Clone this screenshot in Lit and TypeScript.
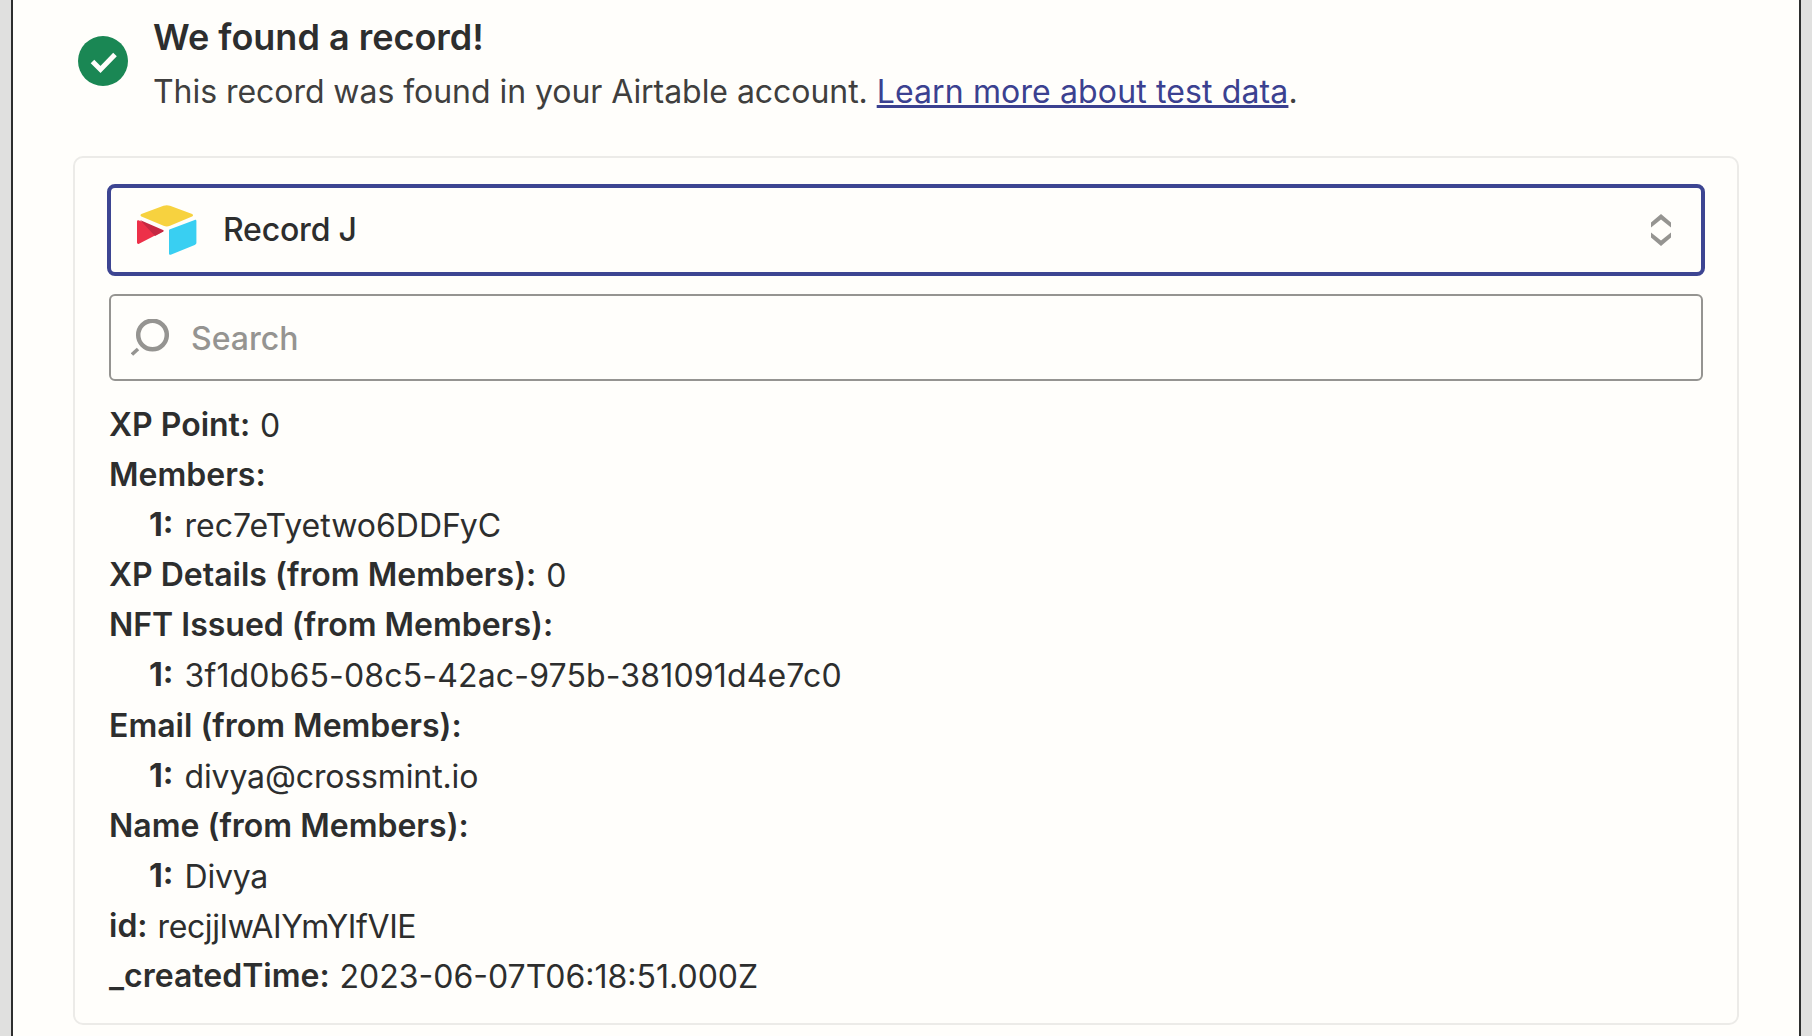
import { LitElement, html, css } from "lit";
import { customElement } from "lit/decorators.js";
import { styleMap } from "lit/directives/style-map.js";

type Row = { k: string; v?: string; sub?: boolean; ls?: number };
const rows: Row[] = [
  { k: "XP Point:", v: "0" },
  { k: "Members:" },
  { k: "1:", v: "rec7eTyetwo6DDFyC", sub: true },
  { k: "XP Details (from Members):", v: "0" },
  { k: "NFT Issued (from Members):" },
  { k: "1:", v: "3f1d0b65-08c5-42ac-975b-381091d4e7c0", sub: true, ls: 0.16 },
  { k: "Email (from Members):" },
  { k: "1:", v: "divya@crossmint.io", sub: true, ls: -0.13 },
  { k: "Name (from Members):" },
  { k: "1:", v: "Divya", sub: true, ls: -0.2 },
  { k: "id:", v: "recjjIwAIYmYIfVIE", ls: -0.4 },
  { k: "_createdTime:", v: "2023-06-07T06:18:51.000Z" },
];

@customElement("app-root")
export class AppRoot extends LitElement {
  static styles = css`
    :host { display: block; width: 1812px; height: 1036px; overflow: hidden; background: #e0e0df; font-family: Inter, "Liberation Sans", sans-serif; color: #2d2e2e; }
    .frame { box-sizing: border-box; margin: 0 11px; width: 1790px; height: 1036px; background: #fffefb; border-left: 2px solid #2d2e2e; border-right: 2px solid #2d2e2e; padding: 0 60px; }
    .head { display: flex; gap: 25px; height: 156px; box-sizing: border-box; padding: 13px 0 0 5px; }
    .check { width: 50px; height: 50px; margin-top: 23px; flex: none; }
    h1 { margin: 0; font-size: 36px; line-height: 48px; font-weight: 600; }
    .sub { margin: 7px 0 0; font-size: 32px; line-height: 48px; font-weight: 400; color: #403f3e; letter-spacing: -0.05px; }
    .sub a { color: #3b4190; text-decoration: underline; letter-spacing: 0.13px; }
    .card { box-sizing: border-box; height: 869px; border: 2px solid #ecebe8; border-radius: 10px; padding: 26px 32px 0; }
    .select { box-sizing: border-box; height: 92px; border: 4px solid #3d4592; border-radius: 8px; display: flex; align-items: center; padding: 0 30px 2px 26px; font-size: 32px; font-weight: 500; letter-spacing: -0.2px; color: #2d2e2e; }
    .select .logo { width: 60px; height: 50px; flex: none; margin: 2px 26px 0 0; }
    .select .label { flex: 1; }
    .select .updown { width: 20px; height: 32px; flex: none; margin-top: 2px; }
    .search { box-sizing: border-box; height: 87px; margin: 18px 2px 0; border: 2px solid #959491; border-radius: 6px; display: flex; align-items: center; padding: 0 0 0 20px; font-size: 32px; font-weight: 500; color: #959491; }
    .search svg { width: 38px; height: 37px; flex: none; margin-right: 22px; }
    .search span { padding-top: 2px; }
    .rows { margin: 19px 0 0 2px; }
    .row { height: 50.1px; line-height: 50.1px; font-size: 32px; white-space: nowrap; }
    .row.sub-row { padding-left: 40px; }
    .row b { font-weight: 600; margin-right: 10px; vertical-align: 1px; letter-spacing: 0; }
    .row.sub-row b { margin-right: 11px; font-weight: 700; }
  `;
  render() {
    return html`<div class="frame">
      <div class="head">
        <svg class="check" viewBox="0 0 50 50"><circle cx="25" cy="25" r="25" fill="#1a8754"/><path d="M14.500 25.500l8 8 14.500-15" fill="none" stroke="#fffefb" stroke-width="5"/></svg>
        <div>
          <h1>We found a record!</h1>
          <p class="sub">This record was found in your Airtable account. <a>Learn more about test data</a>.</p>
        </div>
      </div>
      <div class="card">
        <div class="select">
          <svg class="logo" viewBox="0 0 60 50">
            <path d="M26.500 .8 5 8.700C3 9.500 3 11 5 11.800l21.500 9c2.200.9 4.300.9 6.500 0l21.500-9c2-.8 2-2.300 0-3.100L33 .8c-2.200-.9-4.300-.9-6.500 0z" fill="#f7d23f"/>
            <path d="M32 25.500v23c0 1 .8 1.500 1.700 1.200l24-9.800c1-.4 1.700-1.200 1.700-2.200V16c0-1-.8-1.400-1.700-1.100l-24 9C32.600 24.200 32 24.700 32 25.500z" fill="#39cff2"/>
            <path d="M0 16.500V37.500c0 1.200 1 1.800 2 1.300L26.700 26 2 15.500c-1-.5-2 0-2 1z" fill="#ed3049"/>
            <path d="M3 15 26 25c.8.4.8 1.200 0 1.700l-8 4.300L3 15z" fill="#c62842"/>
          </svg>
          <span class="label">Record J</span>
          <svg class="updown" viewBox="0 0 20 32"><path d="M10 0l10 8.500v5l-10-8-10 8v-5zM0 18.500l10 8 10-8v5L10 32 0 23.500z" fill="#959491"/></svg>
        </div>
        <div class="search">
          <svg viewBox="0 0 38 37"><circle cx="21.500" cy="16" r="14.300" fill="none" stroke="#959491" stroke-width="4.500"/><path d="M1 35.500 7 30" stroke="#959491" stroke-width="3.500" fill="none"/></svg>
          <span>Search</span>
        </div>
        <div class="rows">
          ${rows.map(r => html`<div class="row ${r.sub ? "sub-row" : ""}" style=${styleMap(r.ls ? { letterSpacing: `${r.ls}px` } : {})}><b>${r.k}</b>${r.v ?? ""}</div>`)}
        </div>
      </div>
    </div>`;
  }
}
